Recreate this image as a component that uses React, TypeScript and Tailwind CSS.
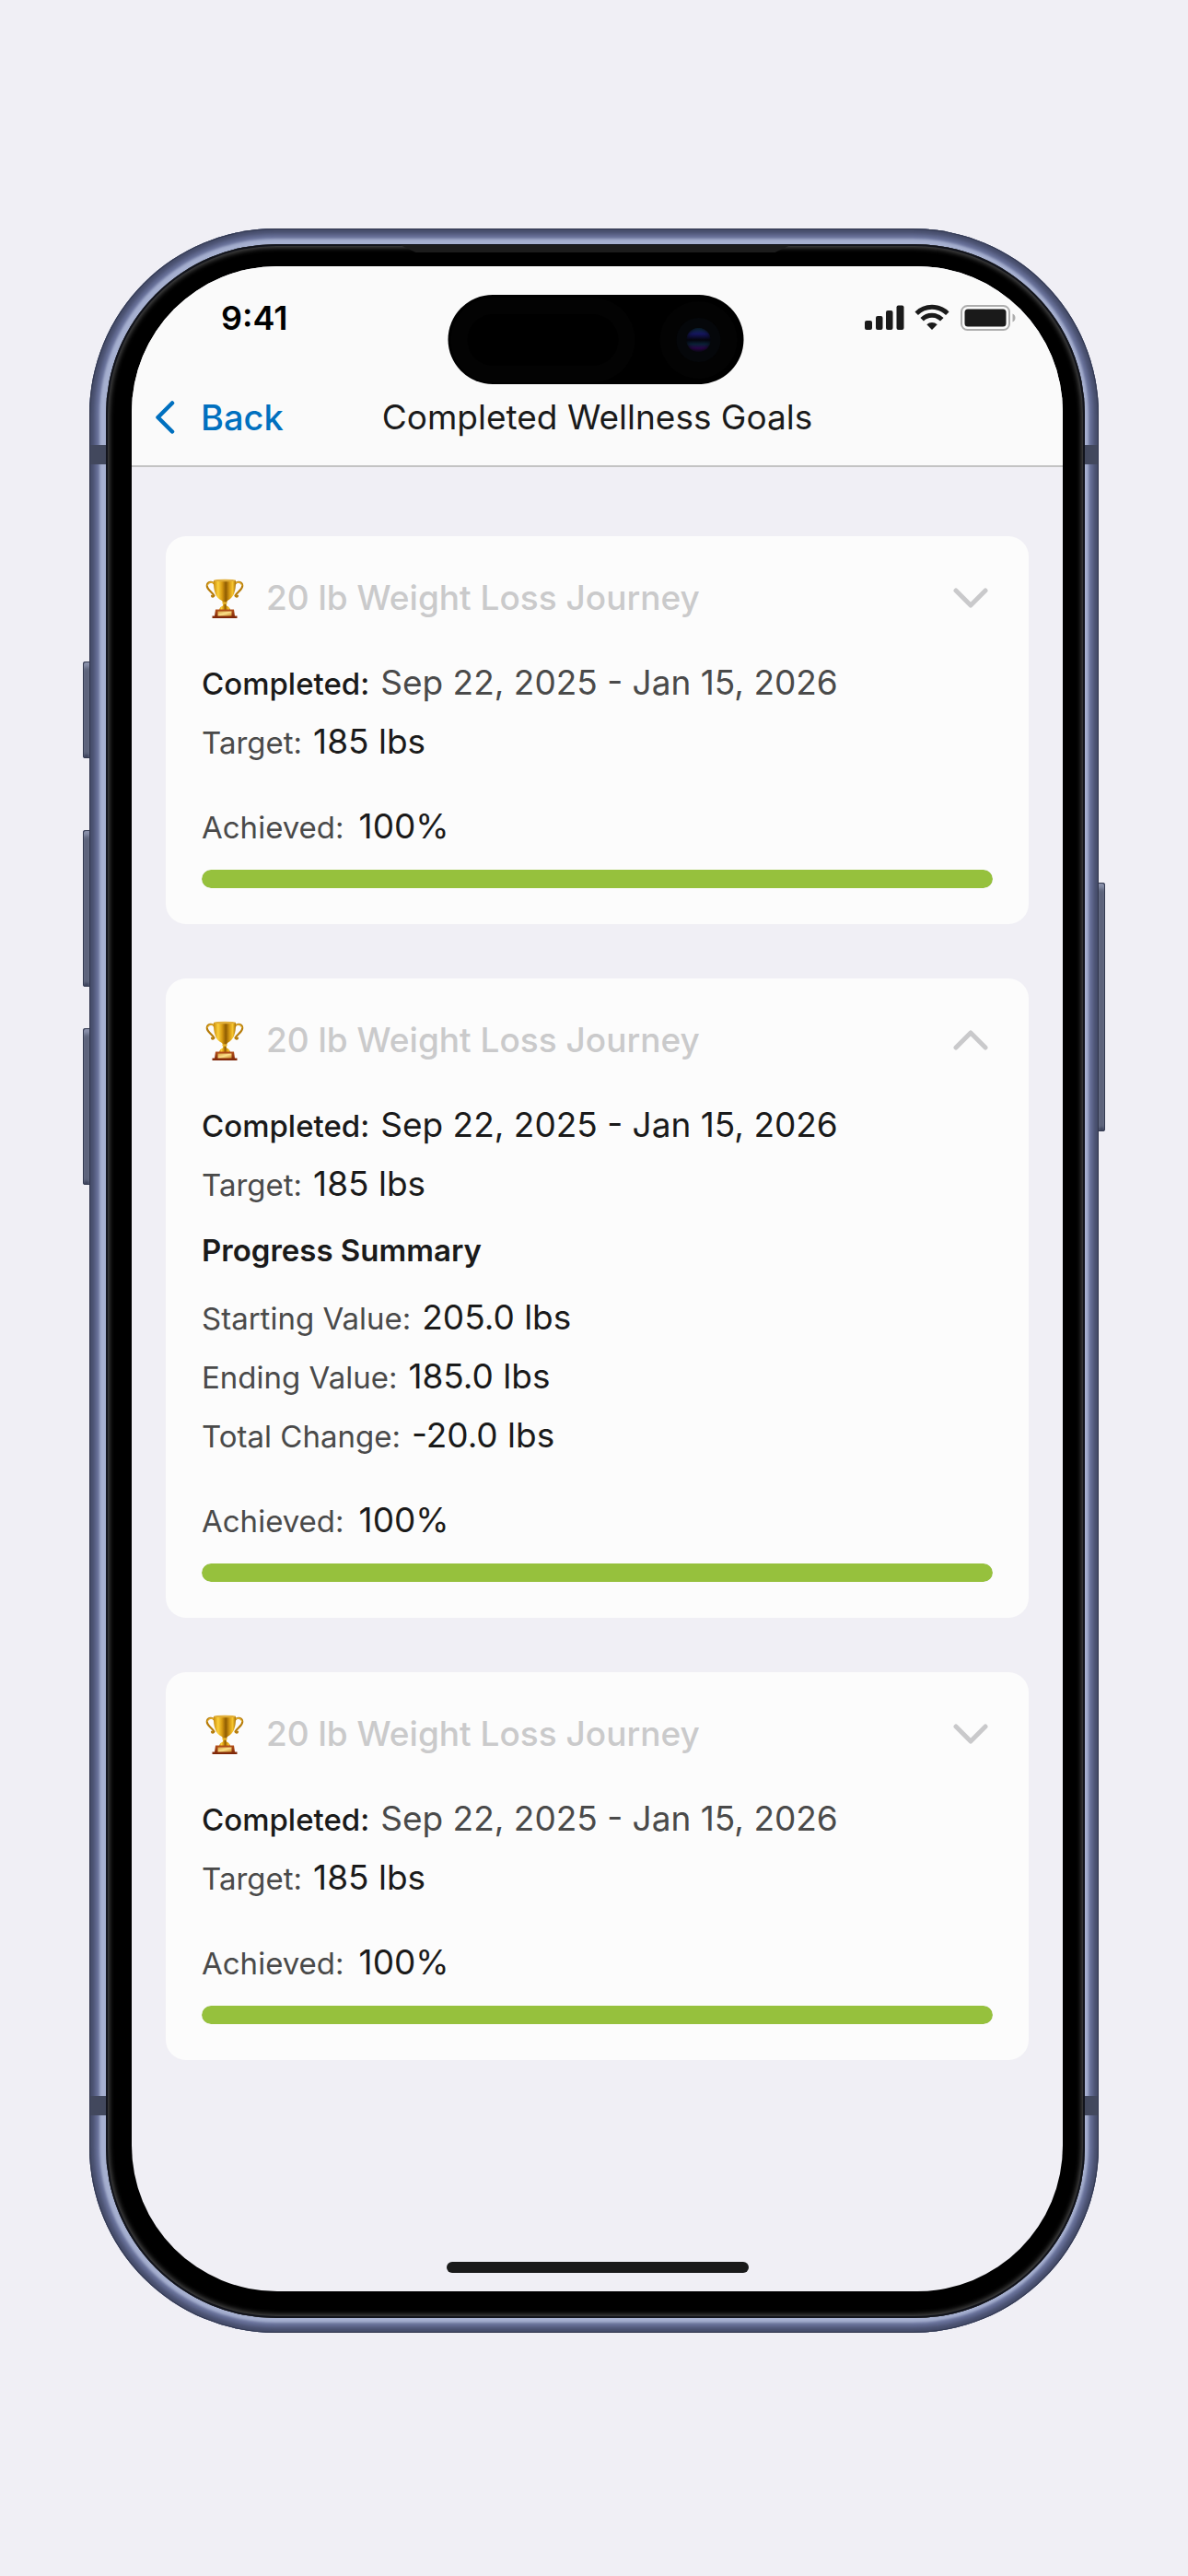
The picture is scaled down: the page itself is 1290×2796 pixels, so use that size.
import { useId, useState } from 'react';

interface Stat {
  label: string;
  value: string;
}

interface Goal {
  id: number;
  title: string;
  period: string;
  target: string;
  achieved: number;
  summary: Stat[];
}

const SUMMARY: Stat[] = [
  { label: 'Starting Value:', value: '205.0 lbs' },
  { label: 'Ending Value:', value: '185.0 lbs' },
  { label: 'Total Change:', value: '-20.0 lbs' },
];

const GOALS: Goal[] = [1, 2, 3].map((id) => ({
  id,
  title: '20 lb Weight Loss Journey',
  period: 'Sep 22, 2025 - Jan 15, 2026',
  target: '185 lbs',
  achieved: 100,
  summary: SUMMARY,
}));

const TrophyIcon = () => {
  const id = useId();
  const gold = `${id}-gold`;
  const wood = `${id}-wood`;
  const plate = `${id}-plate`;

  return (
    <svg viewBox="0 0 42 43" className="h-[43px] w-[42px]" aria-hidden="true">
      <defs>
        <linearGradient id={gold} x1="0" x2="1">
          <stop offset="0" stopColor="#c98a0a" />
          <stop offset="0.2" stopColor="#fbd03b" />
          <stop offset="0.38" stopColor="#d99c12" />
          <stop offset="0.55" stopColor="#8f5c02" />
          <stop offset="0.72" stopColor="#d79b14" />
          <stop offset="0.86" stopColor="#f6c52f" />
          <stop offset="1" stopColor="#a86f05" />
        </linearGradient>
        <linearGradient id={wood} x1="0" x2="0" y1="0" y2="1">
          <stop offset="0" stopColor="#b5511a" />
          <stop offset="1" stopColor="#7a2408" />
        </linearGradient>
        <linearGradient id={plate} x1="0" x2="1" y1="0" y2="1">
          <stop offset="0" stopColor="#d9a040" />
          <stop offset="0.5" stopColor="#fbe08a" />
          <stop offset="1" stopColor="#c98b2c" />
        </linearGradient>
      </defs>
      {/* handles */}
      <g fill="none" strokeLinecap="round">
        <path d="M10 6C8 2.500 2.200 3.200 1.800 7.500C1.500 12 7 14 9.500 18.500C9 20 7.500 20 7 18.800" stroke="#b67c0a" strokeWidth="2.200" />
        <path d="M32 6C34 2.500 39.800 3.200 40.200 7.500C40.500 12 35 14 32.500 18.500C33 20 34.500 20 35 18.800" stroke="#b67c0a" strokeWidth="2.200" />
        <path d="M9 5C6.500 3 2.500 4 2.300 7.500M33 5C35.500 3 39.500 4 39.700 7.500" stroke="#f0bd35" strokeWidth="1" />
      </g>
      {/* cup */}
      <path d="M9 2H33C33.200 11 32 20.500 24 24L22.500 27H19.500L18 24C10 20.500 8.800 11 9 2Z" fill={`url(#${gold})`} />
      <ellipse cx="21" cy="2" rx="12" ry="1.300" fill="#e0ae3a" />
      {/* stem */}
      <path d="M19.500 26H22.500L23 29.500C25.500 30 26.500 32 27 34H15C15.500 32 16.500 30 19 29.500Z" fill={`url(#${gold})`} />
      <ellipse cx="21" cy="26.500" rx="2.800" ry="1.200" fill="#eab62c" />
      {/* base */}
      <path d="M11 33.500H31L32 40.500H34.500V43H7.500V40.500H10Z" fill={`url(#${wood})`} />
      <rect x="13.500" y="35.500" width="15" height="5" fill={`url(#${plate})`} />
    </svg>
  );
};

const Chevron = ({ up }: { up: boolean }) => (
  <svg viewBox="0 0 38 22" className="h-[22px] w-[38px]" fill="none" stroke="#c9c9cb" strokeWidth="5" strokeLinecap="round" strokeLinejoin="round" aria-hidden="true">
    <path d={up ? 'M3 19L19 3L35 19' : 'M3 3L19 19L35 3'} />
  </svg>
);

const StatusIcons = () => (
  <svg viewBox="0 0 166 30" className="h-[30px] w-[166px]" aria-hidden="true">
    <g fill="#1a1a1a">
      <rect x="0" y="18" width="8" height="10" rx="2" />
      <rect x="12" y="13" width="7.500" height="15" rx="2" />
      <rect x="23" y="7" width="7.500" height="21" rx="2" />
      <rect x="34.500" y="1.500" width="8" height="26.500" rx="2" />
    </g>
    {/* wifi arcs share one centre at the bottom tip */}
    <g fill="none" stroke="#1a1a1a" strokeWidth="5">
      <path d="M56.200 10.200A24 24 0 0 1 89.800 10.200" />
      <path d="M62.200 16.800A15.200 15.200 0 0 1 83.800 16.800" />
    </g>
    <path d="M73 28L67.300 22.300A8.300 8.300 0 0 1 78.700 22.300Z" fill="#1a1a1a" />
    <rect x="105" y="2" width="52" height="26" rx="6.500" fill="none" stroke="#adadad" strokeWidth="2" />
    <rect x="108.500" y="5.500" width="45" height="19" rx="3.500" fill="#1a1a1a" />
    <path d="M160.500 10.500C164.500 11.500 164.500 18.500 160.500 19.500Z" fill="#adadad" />
  </svg>
);

const StatRow = ({ label, value }: Stat) => (
  <div className="flex h-16 items-baseline gap-3 leading-[64px]">
    <dt className="text-[33px] text-[#4a4a4a]">{label}</dt>
    <dd className="text-[37px] text-[#1a1a1a]">{value}</dd>
  </div>
);

const GoalCard = ({ goal, defaultOpen }: { goal: Goal; defaultOpen: boolean }) => {
  const [open, setOpen] = useState(defaultOpen);

  return (
    <article className="rounded-[22px] bg-[#fcfcfc] p-[39px]">
      <h2>
        <button
          type="button"
          aria-expanded={open}
          onClick={() => setOpen(!open)}
          className="flex h-14 w-full items-center pr-[5px] pl-1 text-left"
        >
          <TrophyIcon />
          <span className="ml-6 flex-1 text-[37px] font-medium text-[#cacacb]">{goal.title}</span>
          <Chevron up={open} />
        </button>
      </h2>

      <dl className="mt-8">
        <div className="flex h-16 items-baseline gap-3 leading-[64px]">
          <dt className="text-[33px] font-medium text-[#1a1a1a]">Completed:</dt>
          <dd className={`text-[37px] ${open ? 'text-[#1a1a1a]' : 'text-[#4a4a4a]'}`}>{goal.period}</dd>
        </div>
        <StatRow label="Target:" value={goal.target} />
      </dl>

      {open && (
        <section>
          <h3 className="text-[33px] leading-[81px] font-semibold text-[#1a1a1a]">Progress Summary</h3>
          <dl>
            {goal.summary.map((stat) => (
              <StatRow key={stat.label} label={stat.label} value={stat.value} />
            ))}
          </dl>
        </section>
      )}

      <div className="mt-7 flex h-16 items-baseline gap-4 leading-[64px]">
        <span className="text-[33px] text-[#4a4a4a]">Achieved:</span>
        <span className="text-[37px] text-[#1a1a1a]">{goal.achieved}%</span>
      </div>
      <div
        role="progressbar"
        aria-label="Achieved"
        aria-valuenow={goal.achieved}
        className="mt-[15px] h-5 overflow-hidden rounded-full bg-[#e3e3e6]"
      >
        <div className="h-full rounded-full bg-[#96c13d]" style={{ width: `${goal.achieved}%` }}></div>
      </div>
    </article>
  );
};

const SideButton = ({ className }: { className: string }) => (
  <div
    className={`absolute w-[8px] bg-[#5a6178] shadow-[inset_0_0_0_1px_#343a50,inset_0_6px_4px_#8a91ab,inset_0_-4px_3px_#3a4058] ${className}`}
  ></div>
);

const AntennaBand = ({ className }: { className: string }) => (
  <div className={`absolute h-[21px] bg-[#42485d] ${className}`}></div>
);

const DynamicIsland = () => (
  <div className="absolute top-[55px] left-1/2 flex h-[97px] w-[321px] -translate-x-1/2 items-center justify-between rounded-full bg-black pr-[7px] pl-[21px]">
    <div className="h-14 w-[164px] rounded-full bg-black shadow-[0_0_0_18px_#030303]"></div>
    <div className="flex size-[84px] items-center justify-center rounded-full bg-[#030303]">
      <div className="flex size-12 items-center justify-center rounded-full bg-[#05070a]">
        <div className="size-[26px] rounded-full bg-[linear-gradient(#0c2c40,#15155c_25%,#04040c_50%,#0a2036_68%,#2a0448_85%,#100820)] shadow-[inset_0_0_4px_#05070a]"></div>
      </div>
    </div>
  </div>
);

export default function App() {
  return (
    <main className="flex min-h-screen flex-col bg-[#f0eff5] px-[97px] pt-[248px] pb-[264px] font-[Inter,sans-serif] text-[#1a1a1a]">
      <div className="relative flex flex-1 flex-col">
        <SideButton className="top-[470px] -left-[7px] h-[105px] rounded-l-[3px]" />
        <SideButton className="top-[653px] -left-[7px] h-[170px] rounded-l-[3px]" />
        <SideButton className="top-[868px] -left-[7px] h-[170px] rounded-l-[3px]" />
        <SideButton className="top-[710px] -right-[7px] h-[270px] rounded-r-[3px]" />

        {/* Metal frame */}
        <div className="relative flex flex-1 flex-col rounded-[202px] bg-[#a6b0d0] pt-[17px] pr-[15px] pb-4 pl-[18px] shadow-[inset_0_0_1px_1px_#30364c,inset_0_0_4px_6px_#474e6c,inset_0_0_3px_11px_#68719a]">
          <AntennaBand className="top-[235px] left-px w-[17px]" />
          <AntennaBand className="top-[235px] right-px w-[14px]" />
          <AntennaBand className="bottom-[236px] left-px w-[17px]" />
          <AntennaBand className="right-px bottom-[236px] w-[14px]" />

          {/* Glass edge */}
          <div className="relative flex flex-1 flex-col rounded-[185px] bg-black pt-6 pr-6 pb-[29px] pl-7 shadow-[inset_0_0_0_2px_#12141c,inset_0_0_5px_4px_#484848]">
            <div className="absolute top-px left-1/2 h-2 w-[424px] -translate-x-1/2 bg-[#1c1c1c] [clip-path:polygon(0_0,100%_0,96%_100%,4%_100%)]"></div>

            {/* Screen */}
            <div className="flex flex-1 flex-col overflow-hidden rounded-[158px] bg-[#f0eff5]">
              <header className="border-b-2 border-[#c3c3c3] bg-[#fafafa]">
                <div className="flex items-center justify-between pt-[34px] pr-[49px] pl-[97px]">
                  <time className="text-[36px] leading-[44px] font-semibold text-black">9:41</time>
                  <StatusIcons />
                </div>
                <div className="grid grid-cols-[1fr_auto_1fr] items-center pt-[57px] pb-[23px]">
                  <button type="button" className="flex items-center gap-7 justify-self-start pl-[25px] text-[38px] leading-[58px] font-medium text-[#0070bf]">
                    <svg viewBox="0 0 22 36" className="h-9 w-[22px]" fill="none" stroke="currentColor" strokeWidth="4.500" strokeLinecap="round" strokeLinejoin="round" aria-hidden="true">
                      <path d="M19 2.500L3.500 18L19 33.500" />
                    </svg>
                    Back
                  </button>
                  <h1 className="text-[37px] leading-[52px]">Completed Wellness Goals</h1>
                </div>
              </header>

              <div className="flex flex-col gap-[59px] px-[37px] pt-[75px] pb-10">
                {GOALS.map((goal) => (
                  <GoalCard key={goal.id} goal={goal} defaultOpen={goal.id === 2} />
                ))}
              </div>

              <div className="mx-auto mt-auto mb-5 h-3 w-[328px] rounded-full bg-[#1a1a1a]"></div>
            </div>

            <DynamicIsland />
          </div>
        </div>
      </div>
    </main>
  );
}
